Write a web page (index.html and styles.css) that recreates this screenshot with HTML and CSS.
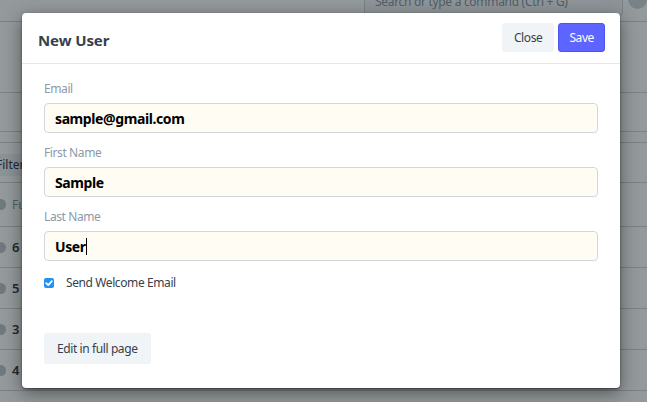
FILE: index.html
```html
<!DOCTYPE html>
<html lang="en">
<head>
<meta charset="utf-8">
<title>New User</title>
<link rel="stylesheet" href="styles.css">
</head>
<body>
<div class="page">
  <header class="navbar">
    <div class="search">Search or type a command (Ctrl + G)</div>
    <div class="avatar"></div>
  </header>
  <div class="page-head"></div>
  <div class="band"></div>
  <div class="band-thin"></div>
  <div class="list-tools"><span class="filter">Filter</span></div>
  <div class="row row-header"><span class="like"></span><span class="muted">Full Name</span></div>
  <div class="row"><span class="like"></span><b>6</b></div>
  <div class="row"><span class="like"></span><b>5</b></div>
  <div class="row"><span class="like"></span><b>3</b></div>
  <div class="row"><span class="like"></span><b>4</b></div>
</div>
<div class="backdrop"></div>
<div class="modal">
  <div class="modal-header">
    <h4 class="modal-title">New User</h4>
    <div class="actions">
      <button class="btn btn-default">Close</button>
      <button class="btn btn-primary">Save</button>
    </div>
  </div>
  <div class="modal-body">
    <div class="field">
      <label class="label">Email</label>
      <div class="input">sample@gmail.com</div>
    </div>
    <div class="field">
      <label class="label">First Name</label>
      <div class="input">Sample</div>
    </div>
    <div class="field">
      <label class="label">Last Name</label>
      <div class="input">User<span class="caret"></span></div>
    </div>
    <div class="check">
      <span class="checkbox"><svg width="10" height="10" viewBox="0 0 10 10"><path d="M2.2 5.2 L4.2 7.1 L7.9 3.1" fill="none" stroke="#fff" stroke-width="1.8" stroke-linecap="round" stroke-linejoin="round"/></svg></span>
      <span class="check-label">Send Welcome Email</span>
    </div>
    <button class="btn btn-default btn-full">Edit in full page</button>
  </div>
</div>
</body>
</html>
```

FILE: styles.css
```css
* { box-sizing: border-box; }
html, body { margin: 0; padding: 0; overflow: hidden; }
body {
  width: 647px;
  height: 402px;
  font-family: "Noto Sans", "Segoe UI", sans-serif;
  color: #36414c;
  background: #fff;
  position: relative;
}
.page { width: 647px; height: 402px; overflow: hidden; }
.navbar {
  height: 22px;
  border-bottom: 1px solid #d1d8dd;
  display: flex;
  align-items: flex-end;
  padding-left: 364px;
}
.search {
  width: 276px;
  height: 28px;
  margin-bottom: 5px;
  border: 1px solid #d1d8dd;
  border-top: none;
  border-radius: 0 0 4px 4px;
  background: #f5f7fa;
  font-size: 12px;
  letter-spacing: -0.3px;
  color: #8d99a6;
  padding: 0 10px 5px;
  display: flex;
  align-items: flex-end;
  line-height: 16px;
}
.avatar {
  width: 20px; height: 20px; border-radius: 50%;
  background: #d1d8dd;
  margin-left: 5px;
  margin-bottom: 12px;
}
.page-head { height: 71px; border-bottom: 1px solid #d1d8dd; }
.band { height: 39px; border-bottom: 1px solid #d1d8dd; }
.band-thin { height: 11px; border-bottom: 1px solid #d1d8dd; }
.list-tools {
  height: 39px;
  padding-top: 9px;
}
.filter {
  display: inline-block;
  margin-left: -12px;
  background: #f0f4f7;
  font-size: 12px;
  line-height: 16px;
  color: #36414c;
  padding: 3px 8px;
  border-radius: 4px;
}
.row {
  height: 41px;
  border-bottom: 1px solid #d1d8dd;
  display: flex;
  align-items: center;
  gap: 6px;
  font-size: 13px;
}
.row-header { border-top: 1px solid #d1d8dd; height: 45px; }
.row b { font-weight: 600; }
.muted { color: #8d99a6; font-size: 12px; }
.like {
  width: 11px; height: 11px; border-radius: 50%;
  background: #c0c6cc;
  margin-left: -5px;
}
.backdrop {
  position: absolute;
  inset: 0;
  background: rgba(0, 12, 16, 0.42);
}
.modal {
  position: absolute;
  left: 22px;
  top: 13px;
  width: 598px;
  height: 375px;
  background: #fff;
  border-radius: 4px;
  box-shadow: 0 5px 18px rgba(0, 0, 0, 0.45), 0 1px 2px rgba(0, 0, 0, 0.5);
  letter-spacing: -0.4px;
}
.modal-header {
  height: 51px;
  border-bottom: 1px solid #e4e8eb;
  display: flex;
  align-items: center;
  justify-content: space-between;
  padding: 0 15px 0 16px;
}
.modal-title {
  margin: 0;
  font-size: 15px;
  font-weight: 700;
  letter-spacing: -0.1px;
  color: #36414c;
  padding-top: 3px;
}
.actions { display: flex; gap: 4px; padding-bottom: 1px; }
.btn {
  font-family: inherit;
  letter-spacing: inherit;
  font-size: 12px;
  border: none;
  border-radius: 3px;
  height: 29px;
  padding: 0 12px;
  cursor: pointer;
}
.btn-default { background: #f0f4f7; color: #36414c; }
.btn-primary { background: #5e64ff; color: #fff; border: 1px solid #4d53ef; padding: 0 10px; }
.modal-body { padding: 16px 22px 0; }
.field { margin-bottom: 11px; }
.label {
  display: block;
  font-size: 12px;
  line-height: 18px;
  color: #8d99a6;
  margin-bottom: 5px;
}
.input {
  height: 30px;
  border: 1px solid #d1d8dd;
  border-radius: 4px;
  background: #fffcf4;
  padding: 0 10px;
  font-size: 14px;
  font-weight: 700;
  color: #000;
  display: flex;
  align-items: center;
}
.caret {
  display: inline-block;
  width: 1px;
  height: 17px;
  background: #000;
}
.check {
  display: flex;
  align-items: center;
  gap: 12px;
  margin-top: 16px;
  height: 11px;
}
.checkbox {
  width: 10px; height: 10px;
  border-radius: 2px;
  background: #2490ef;
  display: flex; align-items: center; justify-content: center;
}
.check-label { font-size: 12px; color: #36414c; }
.btn-full { margin-top: 45px; height: 31px; padding: 0 13px; }
```
